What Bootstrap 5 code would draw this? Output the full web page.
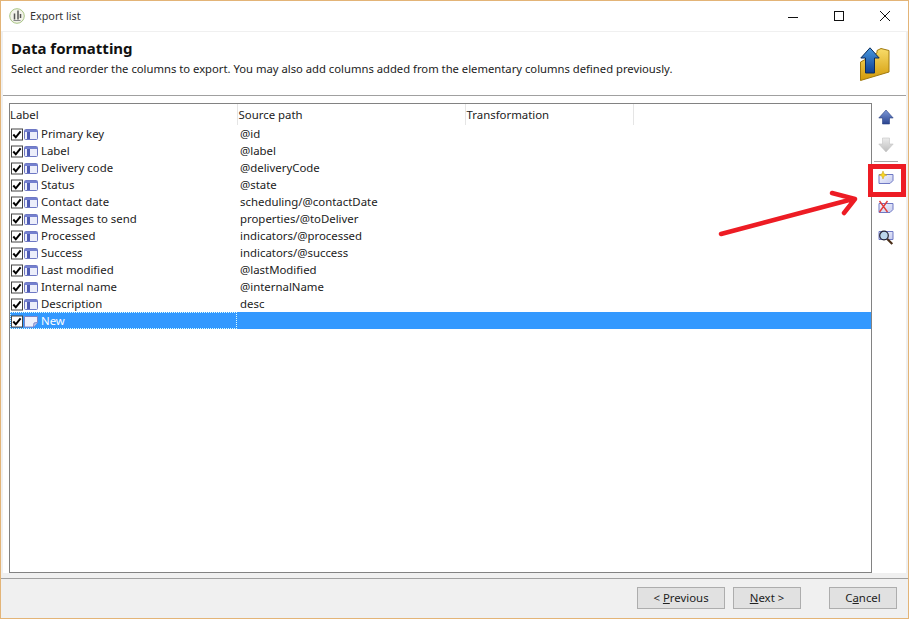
<!DOCTYPE html>
<html lang="en">
<head>
<meta charset="utf-8">
<title>Export list</title>
<link href="https://cdn.jsdelivr.net/npm/bootstrap@5.3.0/dist/css/bootstrap.min.css" rel="stylesheet">
<style>
html,body{height:100%;margin:0;overflow:hidden}
body{background:#fff;font-family:"Noto Sans","DejaVu Sans",sans-serif;font-size:11.4px;color:#111;line-height:1}
.svgdefs{position:absolute;width:0;height:0;overflow:hidden}
.win{width:909px;height:619px;border:1px solid #e3b477;background:#f0f0f0;position:relative}
.titlebar{height:30px;background:#fff;padding:0 0 0 8px}
.titletext{font-size:10.8px;color:#333;margin-left:5px}
.winbtn{width:46px;height:30px}
.pane{background:#fff;margin:1px 2px 0 2px;height:546px}
.headbox{height:64px;padding:7px 16px 0 8px;border-bottom:1px solid #a0a0a0}
.headtitle{font-size:15px;font-weight:700;color:#111;line-height:18px;margin:0}
.headsub{font-size:11.25px;line-height:14px;margin-top:5px;color:#222}
.foldericon{margin-top:8px}
.bodyarea{padding:7px 0 0 6px}
.listbox{width:863px;height:470px;border:1px solid #828282;background:#fff}
.coltable{table-layout:fixed;width:861px;margin:0;--bs-table-bg:transparent;--bs-table-color:#222}
.coltable th,.coltable td{padding:1px 0 0;height:17px;font-weight:400;font-size:11.4px;line-height:16px;white-space:nowrap;border:0;vertical-align:middle;color:#222}
.coltable th{height:21px;line-height:20px;border-right:1px solid #e5e5e5}
.coltable th+th{padding-left:1px}
.coltable th:last-child{border-right:0}
.coltable td.srccell{padding-left:3px}
.coltable tr.picked td{background:#3399ff;color:#fff}
.coltable tr.picked td:first-child{outline:1px dotted #dff;outline-offset:-1px}
.chk{width:12px;height:13px;margin:0 1px 0 1px;flex:none}
.rowicon{width:14px;height:13px;margin-right:3px;flex:none}
.tools{width:28px;padding-top:6px}
.toolbtn{height:16px}
.after-up{margin-bottom:12px}
.after-new{margin-bottom:13px}
.after-del{margin-bottom:14px}
.toolsep{height:1px;width:24px;background:#a8a8a8;margin:0 0 8px 2px}
.footbar{height:40px;border-top:1px solid #a0a0a0;background:#f0f0f0;padding:8px 11px 0 0;margin:5px 0 0 0}
.wbtn{height:22px;border:1px solid #adadad;background:#e1e1e1;color:#222;font-size:11.4px;line-height:1;padding:0 0 1px;border-radius:0;--bs-btn-padding-y:0}
.wbtn u{text-underline-offset:1px}
.w88{width:88px}.w68{width:68px}
.cancelgap{margin-left:28px}
.redbox{position:absolute;left:867px;top:163px;width:38px;height:33px;border:5px solid #ed1c24}
.redarrow{position:absolute;left:709px;top:185px;width:150px;height:60px}
</style>
</head>
<body>
<svg class="svgdefs" aria-hidden="true">
<defs>
<linearGradient id="gup" x1="0" y1="0" x2="0" y2="1"><stop offset="0" stop-color="#7f9ad8"/><stop offset="1" stop-color="#2a4490"/></linearGradient>
<linearGradient id="gdn" x1="0" y1="0" x2="0" y2="1"><stop offset="0" stop-color="#ececec"/><stop offset="1" stop-color="#bdbdbd"/></linearGradient>
<linearGradient id="gpage" x1="0" y1="0" x2="1" y2="1"><stop offset="0" stop-color="#f6f7ff"/><stop offset="1" stop-color="#c5cbee"/></linearGradient>
<linearGradient id="gfold" x1="0" y1="0" x2="0" y2="1"><stop offset="0" stop-color="#f8dc6a"/><stop offset="1" stop-color="#d29a08"/></linearGradient>
<linearGradient id="gblue" x1="0" y1="0" x2="0" y2="1"><stop offset="0" stop-color="#4a9ae0"/><stop offset="1" stop-color="#0d3f94"/></linearGradient>
<symbol id="chk" viewBox="0 0 12 13"><rect x=".5" y="1" width="11" height="11" fill="#fff" stroke="#444"/><path d="M2.300 6.500l2.500 2.800 4.800-6" fill="none" stroke="#000" stroke-width="2"/></symbol>
<symbol id="col" viewBox="0 0 14 13"><rect x=".5" y="1.500" width="13" height="10" rx="1" fill="#eceefa" stroke="#6e78c4"/><rect x="1" y="2" width="12" height="2" fill="#7480cf"/><rect x="3" y="4" width="3" height="7" fill="#4f5cb4"/></symbol>
<symbol id="neu" viewBox="0 0 14 13"><path d="M.5 1.500h13v6l-4 4.500h-9z" fill="#eef0fb" stroke="#7a84c8"/><path d="M9.500 12l.5-4 3.500-.5" fill="#c8cdf0" stroke="#7a84c8"/></symbol>
</defs>
</svg>
<div class="win d-flex flex-column">
  <div class="titlebar d-flex align-items-center">
    <svg width="16" height="16" viewBox="0 0 16 16"><circle cx="8" cy="8" r="7.300" fill="#f2f2ea" stroke="#a9c585"/><path d="M9 2.500v9M5.500 5.500v6M11.500 6v4" stroke="#555" stroke-width="1.500"/><path d="M4.500 12.500h7" stroke="#888"/></svg>
    <span class="titletext">Export list</span>
    <div class="ms-auto d-flex">
      <div class="winbtn d-flex align-items-center justify-content-center"><svg width="12" height="12" viewBox="0 0 12 12"><path d="M1 7.500h10" stroke="#111"/></svg></div>
      <div class="winbtn d-flex align-items-center justify-content-center"><svg width="12" height="12" viewBox="0 0 12 12"><rect x="1.500" y="1.500" width="9" height="9" fill="none" stroke="#111"/></svg></div>
      <div class="winbtn d-flex align-items-center justify-content-center"><svg width="12" height="12" viewBox="0 0 12 12"><path d="M1 1l10 10M11 1l-10 10" stroke="#111"/></svg></div>
    </div>
  </div>
  <div class="pane">
    <div class="headbox d-flex justify-content-between">
      <div>
        <h1 class="headtitle">Data formatting</h1>
        <div class="headsub">Select and reorder the columns to export. You may also add columns added from the elementary columns defined previously.</div>
      </div>
      <svg class="foldericon" width="30" height="34" viewBox="0 0 30 34">
        <path d="M.5 15L17 6V3.500l4-2 8 2V25L.5 33.500z" fill="url(#gfold)" stroke="#a07a10"/>
        <path d="M10 .8L.8 11H5.500v15h9V11h4.700z" fill="url(#gblue)" stroke="#0c2c5a" stroke-width="1"/>
      </svg>
    </div>
    <div class="bodyarea d-flex">
      <div class="listbox">
        <table class="table coltable">
          <colgroup><col style="width:227px"><col style="width:228px"><col style="width:168px"><col></colgroup>
          <thead><tr><th>Label</th><th>Source path</th><th>Transformation</th><th></th></tr></thead>
          <tbody>
            <tr><td><div class="d-flex align-items-center"><svg class="chk"><use href="#chk"/></svg><svg class="rowicon"><use href="#col"/></svg>Primary key</div></td><td class="srccell">@id</td><td></td><td></td></tr>
            <tr><td><div class="d-flex align-items-center"><svg class="chk"><use href="#chk"/></svg><svg class="rowicon"><use href="#col"/></svg>Label</div></td><td class="srccell">@label</td><td></td><td></td></tr>
            <tr><td><div class="d-flex align-items-center"><svg class="chk"><use href="#chk"/></svg><svg class="rowicon"><use href="#col"/></svg>Delivery code</div></td><td class="srccell">@deliveryCode</td><td></td><td></td></tr>
            <tr><td><div class="d-flex align-items-center"><svg class="chk"><use href="#chk"/></svg><svg class="rowicon"><use href="#col"/></svg>Status</div></td><td class="srccell">@state</td><td></td><td></td></tr>
            <tr><td><div class="d-flex align-items-center"><svg class="chk"><use href="#chk"/></svg><svg class="rowicon"><use href="#col"/></svg>Contact date</div></td><td class="srccell">scheduling/@contactDate</td><td></td><td></td></tr>
            <tr><td><div class="d-flex align-items-center"><svg class="chk"><use href="#chk"/></svg><svg class="rowicon"><use href="#col"/></svg>Messages to send</div></td><td class="srccell">properties/@toDeliver</td><td></td><td></td></tr>
            <tr><td><div class="d-flex align-items-center"><svg class="chk"><use href="#chk"/></svg><svg class="rowicon"><use href="#col"/></svg>Processed</div></td><td class="srccell">indicators/@processed</td><td></td><td></td></tr>
            <tr><td><div class="d-flex align-items-center"><svg class="chk"><use href="#chk"/></svg><svg class="rowicon"><use href="#col"/></svg>Success</div></td><td class="srccell">indicators/@success</td><td></td><td></td></tr>
            <tr><td><div class="d-flex align-items-center"><svg class="chk"><use href="#chk"/></svg><svg class="rowicon"><use href="#col"/></svg>Last modified</div></td><td class="srccell">@lastModified</td><td></td><td></td></tr>
            <tr><td><div class="d-flex align-items-center"><svg class="chk"><use href="#chk"/></svg><svg class="rowicon"><use href="#col"/></svg>Internal name</div></td><td class="srccell">@internalName</td><td></td><td></td></tr>
            <tr><td><div class="d-flex align-items-center"><svg class="chk"><use href="#chk"/></svg><svg class="rowicon"><use href="#col"/></svg>Description</div></td><td class="srccell">desc</td><td></td><td></td></tr>
            <tr class="picked"><td><div class="d-flex align-items-center"><svg class="chk"><use href="#chk"/></svg><svg class="rowicon"><use href="#neu"/></svg>New</div></td><td></td><td></td><td></td></tr>
          </tbody>
        </table>
      </div>
      <div class="tools d-flex flex-column">
        <div class="toolbtn after-up d-flex justify-content-center"><svg width="16" height="16" viewBox="0 0 16 16"><path d="M8 1L.8 9H4.500v6h7V9h3.700z" fill="url(#gup)" stroke="#2a4080" stroke-width=".6"/></svg></div>
        <div class="toolbtn mb-2 d-flex justify-content-center"><svg width="16" height="16" viewBox="0 0 16 16"><path d="M8 15L.8 7H4.500V1h7v6h3.700z" fill="url(#gdn)" stroke="#c4c4c4" stroke-width=".6"/></svg></div>
        <div class="toolsep"></div>
        <div class="toolbtn after-new d-flex justify-content-center"><svg width="16" height="16" viewBox="0 0 16 16"><path d="M1 4.500h14v6l-3 3H1z" fill="url(#gpage)" stroke="#6e78c4"/><path d="M5 1l1.100 2.900L9 5 6.100 6.100 5 9 3.900 6.100 1 5l2.900-1.100z" fill="#f8d820" stroke="#c89a10" stroke-width=".5"/></svg></div>
        <div class="toolbtn after-del d-flex justify-content-center"><svg width="16" height="16" viewBox="0 0 16 16"><path d="M1 4.500h14v6l-3 3H1z" fill="url(#gpage)" stroke="#6e78c4"/><path d="M1.500 2l8 11M9.500 2L1.500 13" stroke="#e03c3c" stroke-width="1.400"/></svg></div>
        <div class="toolbtn d-flex justify-content-center"><svg width="16" height="16" viewBox="0 0 16 16"><path d="M1 2.500h14v8H1z" fill="url(#gpage)" stroke="#6e78c4"/><circle cx="6" cy="6.500" r="4.300" fill="#bcd6ec" stroke="#223"  stroke-width="1.200"/><path d="M9.300 10l5 5" stroke="#4a2e18" stroke-width="2.200"/></svg></div>
      </div>
    </div>
  </div>
  <div class="footbar d-flex justify-content-end">
    <button class="btn wbtn w88" type="button">&lt; <u>P</u>revious</button>
    <button class="btn wbtn w68 ms-2" type="button"><u>N</u>ext &gt;</button>
    <button class="btn wbtn w68 cancelgap" type="button">C<u>a</u>ncel</button>
  </div>
  <div class="redbox"></div>
  <svg class="redarrow" viewBox="0 0 150 60"><path d="M11 48L143 13M122 7l23 6-11 14" fill="none" stroke="#ed1c24" stroke-width="4.500" stroke-linecap="round" stroke-linejoin="round"/></svg>
</div>
</body>
</html>
